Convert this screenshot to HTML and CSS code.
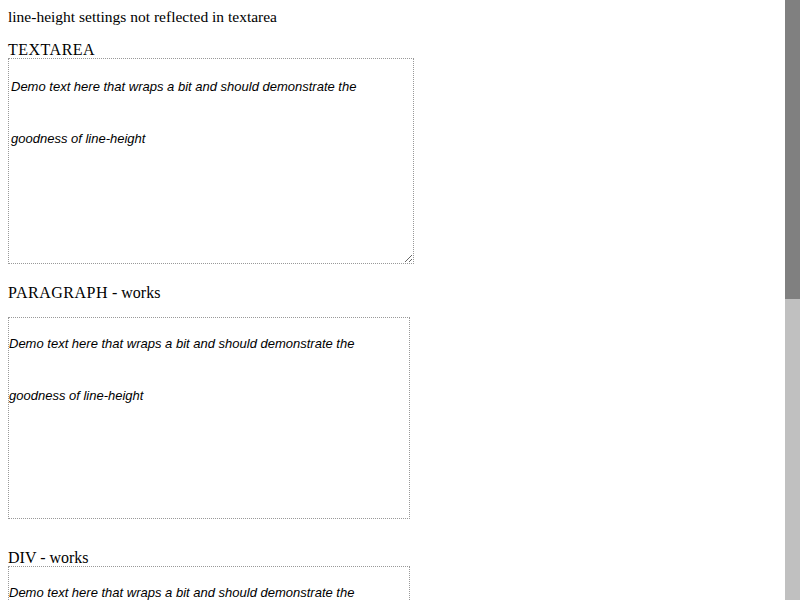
FILE: index.html
```html
<!DOCTYPE html>
<html>
<head>
<meta charset="utf-8">
<title>line-height</title>
<link rel="stylesheet" href="styles.css">
</head>
<body>
<div class="title">line-height settings not reflected in textarea</div>
<div class="label label-first"><span class="caps">TEXTAREA</span></div>
<textarea class="demo-area">Demo text here that wraps a bit and should demonstrate the goodness of line-height</textarea>
<div class="label label-para"><span class="caps">PARAGRAPH</span> - works</div>
<p class="demo-box demo-p">Demo text here that wraps a bit and should demonstrate the goodness of line-height</p>
<div class="label label-div">DIV - works</div>
<div class="demo-box">Demo text here that wraps a bit and should demonstrate the goodness of line-height</div>
<div class="spacer"></div>
<div class="scrollbar"><div class="scrollbar-thumb"></div></div>
</body>
</html>
```

FILE: styles.css
```css
html, body {
  background: #fff;
}
html {
  overflow: hidden;
}
body {
  margin: 8px;
  font-family: "Liberation Serif", "Times New Roman", serif;
  font-size: 16px;
  color: #000;
}
.title {
  line-height: 18px;
  font-size: 15.5px;
}
.label {
  line-height: 17px;
}
.caps {
  letter-spacing: 0.5px;
}
.label-first {
  margin-top: 15px;
}
.label-para {
  margin-top: 20px;
}
.label-div {
  margin-top: 30px;
}
.demo-area,
.demo-box {
  display: block;
  box-sizing: content-box;
  width: 400px;
  height: 200px;
  margin: 0;
  font-family: "Liberation Sans", Arial, sans-serif;
  font-style: italic;
  font-size: 13px;
  line-height: 4;
  color: #000;
  border: 1px dotted #999;
  background: #fff;
}
.demo-area {
  padding: 2px;
  resize: both;
  outline: none;
}
.demo-box {
  padding: 0;
}
.demo-p {
  margin: 16px 0;
}
.spacer {
  height: 428px;
}
.scrollbar {
  position: fixed;
  top: 0;
  right: 0;
  width: 15px;
  height: 600px;
  background: #c0c0c0;
}
.scrollbar-thumb {
  height: 299px;
  background: #808080;
}
```
